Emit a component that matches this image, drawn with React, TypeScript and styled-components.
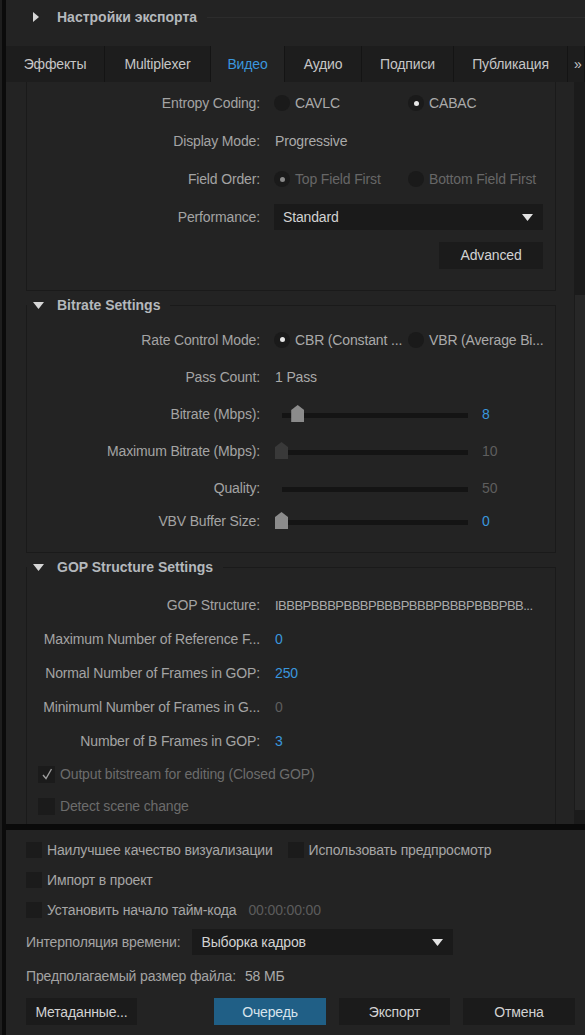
import React from 'react'
import styled, { createGlobalStyle } from 'styled-components'

const GlobalStyle = createGlobalStyle`
  * { box-sizing: border-box; }
  html, body { margin: 0; padding: 0; background: #232323; }
  body {
    font-family: "Liberation Sans", Arial, sans-serif;
    font-size: 14px;
    letter-spacing: -0.15px;
    color: #a4a4a4;
  }
`

const BLUE = '#3a96dd'

const Window = styled.div`
  width: 585px;
  height: 1035px;
  display: flex;
  overflow: hidden;
  background: #232323;
`

const EdgeStrip = styled.div`
  flex: none;
  width: 6px;
  background: #0b0b0b;
  border-left: 2px solid #1e1e1e;
`

const Main = styled.div`
  flex: 1;
  min-width: 0;
  display: flex;
  flex-direction: column;
`

const Header = styled.div`
  height: 46px;
  flex: none;
  display: flex;
  align-items: center;
  padding: 0 0 12px 27px;
`

const HeaderTitle = styled.span`
  margin-left: 18px;
  font-weight: bold;
  letter-spacing: 0;
  color: #b4b8bc;
  white-space: nowrap;
`

const HeaderRule = styled.div`
  flex: 1;
  height: 1px;
  margin-left: 10px;
  background: #2c2c2c;
`

const TabBar = styled.div`
  height: 36px;
  flex: none;
  display: flex;
  background: #161616;
  overflow: hidden;
`

const Tab = styled.div<{ $w?: number; $active?: boolean }>`
  flex: ${p => (p.$w ? 'none' : '1')};
  width: ${p => (p.$w ? `${p.$w}px` : 'auto')};
  display: flex;
  align-items: center;
  justify-content: ${p => (p.$w ? 'center' : 'flex-start')};
  padding-left: ${p => (p.$w ? '0' : '6px')};
  border-right: 1px solid #141414;
  background: ${p => (p.$active ? '#232323' : '#1d1d1d')};
  color: ${p => (p.$active ? BLUE : '#c6c6c6')};
  white-space: nowrap;
`

const ScrollView = styled.div`
  height: 742px;
  flex: none;
  display: flex;
  overflow: hidden;
`

const ScrollContent = styled.div`
  flex: 1;
  min-width: 0;
  padding: 0 18px 0 20px;
  display: flex;
  flex-direction: column;
  overflow: hidden;
`

const ScrollTrack = styled.div`
  flex: none;
  width: 11px;
  background: #1b1b1b;
`

const ScrollThumb = styled.div`
  margin: 213px 0 0 1px;
  height: 515px;
  background: #272727;
`

const ContinuedBox = styled.div`
  flex: none;
  border: 1px solid #1a1a1a;
  border-top: none;
  padding: 2px 0 16px;
  display: flex;
  flex-direction: column;
`

const Group = styled.fieldset`
  flex: none;
  margin: 3px 0 0;
  padding: 0 0 17px;
  min-width: 0;
  border: 1px solid #1a1a1a;
  display: flex;
  flex-direction: column;
`

const GroupBody = styled.div<{ $pt: number }>`
  padding-top: ${p => p.$pt}px;
  display: flex;
  flex-direction: column;
`

const Legend = styled.legend`
  height: 22px;
  display: flex;
  align-items: center;
  padding: 0 10px 0 6px;
  margin: 0;
  font-weight: bold;
  letter-spacing: 0;
  color: #b4b8bc;
  white-space: nowrap;
  & > svg {
    margin-right: 13px;
  }
`

const FormRow = styled.div<{ $h: number; $end?: boolean }>`
  height: ${p => p.$h}px;
  flex: none;
  display: flex;
  align-items: center;
  justify-content: ${p => (p.$end ? 'flex-end' : 'flex-start')};
  padding-right: ${p => (p.$end ? '12px' : '0')};
`

const Label = styled.div`
  flex: none;
  width: 221px;
  margin: 0 15px 0 12px;
  text-align: right;
  white-space: nowrap;
  overflow: hidden;
  text-overflow: ellipsis;
  color: #a4a4a4;
`

const Value = styled.span<{ $tone?: 'blue' | 'dim' | 'plain'; $narrow?: boolean }>`
  white-space: nowrap;
  font-size: ${p => (p.$narrow ? '13px' : 'inherit')};
  letter-spacing: ${p => (p.$narrow ? '-0.5px' : 'inherit')};
  color: ${p => (p.$tone === 'blue' ? BLUE : p.$tone === 'dim' ? '#5e5e5e' : '#aaaaaa')};
`

const RadioGroup = styled.div`
  display: grid;
  grid-template-columns: 134px auto;
  margin-left: -1px;
`

const RadioOption = styled.label<{ $disabled?: boolean }>`
  display: flex;
  align-items: center;
  gap: 5px;
  min-width: 0;
  white-space: nowrap;
  color: ${p => (p.$disabled ? '#676767' : '#aaaaaa')};
`

const RadioCircle = styled.span<{ $on?: boolean; $disabled?: boolean }>`
  flex: none;
  width: 16px;
  height: 16px;
  border-radius: 50%;
  background: #1a1a1a;
  display: flex;
  align-items: center;
  justify-content: center;
  &::after {
    content: '';
    display: ${p => (p.$on ? 'block' : 'none')};
    width: 5px;
    height: 5px;
    border-radius: 50%;
    background: ${p => (p.$disabled ? '#8a8a8a' : '#e6e6e6')};
  }
`

const Select = styled.div<{ $w: number }>`
  width: ${p => p.$w}px;
  height: 26px;
  display: flex;
  align-items: center;
  justify-content: space-between;
  padding: 0 10px 0 9px;
  background: #1a1a1a;
  color: #d2d2d2;
`

const Button = styled.button<{ $primary?: boolean; $w?: number }>`
  flex: none;
  width: ${p => p.$w ?? 111}px;
  height: 27px;
  border: none;
  padding: 0;
  font: inherit;
  letter-spacing: inherit;
  background: ${p => (p.$primary ? '#205f86' : '#1b1b1b')};
  color: ${p => (p.$primary ? '#d8e4ec' : '#d2d2d2')};
`

const SliderWrap = styled.div`
  position: relative;
  flex: none;
  width: 193px;
  height: 17px;
  padding: 8px 0 4px 7px;
`

const Track = styled.div`
  height: 5px;
  background: #141414;
`

const Thumb = styled.div<{ $dim?: boolean }>`
  position: absolute;
  top: 0;
  width: 13px;
  height: 17px;
  background: ${p => (p.$dim ? '#393939' : '#8b8b8b')};
  clip-path: polygon(50% 0, 100% 30%, 100% 100%, 0 100%, 0 30%);
`

const SliderValue = styled(Value)`
  margin-left: 14px;
`

const CheckBox = styled.span<{ $size?: number }>`
  flex: none;
  width: ${p => p.$size ?? 16}px;
  height: ${p => p.$size ?? 16}px;
  background: #1b1b1b;
  display: flex;
  align-items: center;
  justify-content: center;
`

const CheckLine = styled.label<{ $indent?: number; $disabled?: boolean }>`
  display: flex;
  align-items: center;
  gap: 5px;
  margin-left: ${p => p.$indent ?? 0}px;
  white-space: nowrap;
  color: ${p => (p.$disabled ? '#6c6c6c' : '#a6a6a6')};
`

const Separator = styled.div`
  height: 6px;
  flex: none;
  background: #0a0a0a;
`

const BottomPanel = styled.div`
  flex: 1;
  padding: 5px 10px 0 20px;
  display: flex;
  flex-direction: column;
`

const BottomRow = styled.div<{ $h: number }>`
  height: ${p => p.$h}px;
  flex: none;
  display: flex;
  align-items: center;
  white-space: nowrap;
`

const TimeCode = styled.span`
  margin-left: 12px;
  color: #5c5c5c;
`

const InlineLabel = styled.span<{ $gap?: number }>`
  margin-right: ${p => p.$gap ?? 0}px;
  color: #a4a4a4;
`

const ButtonBar = styled.div`
  margin-top: 5px;
  display: flex;
  align-items: center;
`

const ButtonGroup = styled.div`
  margin-left: auto;
  display: flex;
  gap: 13px;
`

const Caret = ({ dir }: { dir: 'right' | 'down' }) =>
  dir === 'right' ? (
    <svg width="6" height="10" viewBox="0 0 6 10">
      <polygon points="0,0 6,5 0,10" fill="#d6d6d6" />
    </svg>
  ) : (
    <svg width="11" height="7" viewBox="0 0 11 7">
      <polygon points="0,0 11,0 5.5,7" fill="#d6d6d6" />
    </svg>
  )

const DropArrow = () => (
  <svg width="11" height="7" viewBox="0 0 11 7">
    <polygon points="0,0 11,0 5.5,7" fill="#e2e2e2" />
  </svg>
)

const Tick = () => (
  <svg width="14" height="14" viewBox="0 0 14 14">
    <path d="M3 8 L6 11.5 L11.5 2" fill="none" stroke="#9c9c9c" strokeWidth="1.4" />
  </svg>
)

function Radio({ label, on, disabled }: { label: string; on?: boolean; disabled?: boolean }) {
  return (
    <RadioOption $disabled={disabled}>
      <RadioCircle $on={on} $disabled={disabled} />
      {label}
    </RadioOption>
  )
}

function Slider({ pos, value, tone, dim, noThumb }: { pos: number; value: string; tone: 'blue' | 'dim'; dim?: boolean; noThumb?: boolean }) {
  return (
    <>
      <SliderWrap>
        <Track />
        {!noThumb && <Thumb $dim={dim} style={{ left: `${pos * 180}px` }} />}
      </SliderWrap>
      <SliderValue $tone={tone}>{value}</SliderValue>
    </>
  )
}

const tabs = [
  { title: 'Эффекты', w: 99 },
  { title: 'Multiplexer', w: 106 },
  { title: 'Видео', w: 74, active: true },
  { title: 'Аудио', w: 77 },
  { title: 'Подписи', w: 92 },
  { title: 'Публикация', w: 114 },
]

export default function App() {
  return (
    <>
      <GlobalStyle />
      <Window>
        <EdgeStrip />
        <Main>
          <Header>
            <Caret dir="right" />
            <HeaderTitle>Настройки экспорта</HeaderTitle>
            <HeaderRule />
          </Header>

          <TabBar>
            {tabs.map(t => (
              <Tab key={t.title} $w={t.w} $active={t.active}>
                {t.title}
              </Tab>
            ))}
            <Tab>»</Tab>
          </TabBar>

          <ScrollView>
            <ScrollContent>
              <ContinuedBox>
                <FormRow $h={38}>
                  <Label>Entropy Coding:</Label>
                  <RadioGroup>
                    <Radio label="CAVLC" />
                    <Radio label="CABAC" on />
                  </RadioGroup>
                </FormRow>
                <FormRow $h={38}>
                  <Label>Display Mode:</Label>
                  <Value>Progressive</Value>
                </FormRow>
                <FormRow $h={38}>
                  <Label>Field Order:</Label>
                  <RadioGroup>
                    <Radio label="Top Field First" on disabled />
                    <Radio label="Bottom Field First" disabled />
                  </RadioGroup>
                </FormRow>
                <FormRow $h={38}>
                  <Label>Performance:</Label>
                  <Select $w={269} style={{ marginLeft: -1 }}>
                    Standard
                    <DropArrow />
                  </Select>
                </FormRow>
                <FormRow $h={38} $end>
                  <Button $w={104}>Advanced</Button>
                </FormRow>
              </ContinuedBox>

              <Group>
                <Legend>
                  <Caret dir="down" />
                  Bitrate Settings
                </Legend>
                <GroupBody $pt={5}>
                  <FormRow $h={37}>
                    <Label>Rate Control Mode:</Label>
                    <RadioGroup>
                      <Radio label="CBR (Constant ..." on />
                      <Radio label="VBR (Average Bi..." />
                    </RadioGroup>
                  </FormRow>
                  <FormRow $h={37}>
                    <Label>Pass Count:</Label>
                    <Value>1 Pass</Value>
                  </FormRow>
                  <FormRow $h={37}>
                    <Label>Bitrate (Mbps):</Label>
                    <Slider pos={0.09} value="8" tone="blue" />
                  </FormRow>
                  <FormRow $h={37}>
                    <Label>Maximum Bitrate (Mbps):</Label>
                    <Slider pos={0} value="10" tone="dim" dim />
                  </FormRow>
                  <FormRow $h={37}>
                    <Label>Quality:</Label>
                    <Slider pos={0} value="50" tone="dim" noThumb />
                  </FormRow>
                  <FormRow $h={29}>
                    <Label>VBV Buffer Size:</Label>
                    <Slider pos={0} value="0" tone="blue" />
                  </FormRow>
                </GroupBody>
              </Group>

              <Group>
                <Legend>
                  <Caret dir="down" />
                  GOP Structure Settings
                </Legend>
                <GroupBody $pt={10}>
                  <FormRow $h={34}>
                    <Label>GOP Structure:</Label>
                    <Value $narrow>IBBBPBBBPBBBPBBBPBBBPBBBPBBBPBB...</Value>
                  </FormRow>
                  <FormRow $h={34}>
                    <Label>Maximum Number of Reference F...</Label>
                    <Value $tone="blue">0</Value>
                  </FormRow>
                  <FormRow $h={34}>
                    <Label>Normal Number of Frames in GOP:</Label>
                    <Value $tone="blue">250</Value>
                  </FormRow>
                  <FormRow $h={34}>
                    <Label>Minimuml Number of Frames in G...</Label>
                    <Value $tone="dim">0</Value>
                  </FormRow>
                  <FormRow $h={34}>
                    <Label>Number of B Frames in GOP:</Label>
                    <Value $tone="blue">3</Value>
                  </FormRow>
                  <FormRow $h={32}>
                    <CheckLine $indent={11} $disabled>
                      <CheckBox $size={17}>
                        <Tick />
                      </CheckBox>
                      Output bitstream for editing (Closed GOP)
                    </CheckLine>
                  </FormRow>
                  <FormRow $h={32}>
                    <CheckLine $indent={11} $disabled>
                      <CheckBox $size={17} />
                      Detect scene change
                    </CheckLine>
                  </FormRow>
                  <FormRow $h={40} />
                </GroupBody>
              </Group>
            </ScrollContent>
            <ScrollTrack>
              <ScrollThumb />
            </ScrollTrack>
          </ScrollView>

          <Separator />

          <BottomPanel>
            <BottomRow $h={30}>
              <CheckLine>
                <CheckBox />
                Наилучшее качество визуализации
              </CheckLine>
              <CheckLine $indent={15}>
                <CheckBox />
                Использовать предпросмотр
              </CheckLine>
            </BottomRow>
            <BottomRow $h={30}>
              <CheckLine>
                <CheckBox />
                Импорт в проект
              </CheckLine>
            </BottomRow>
            <BottomRow $h={30}>
              <CheckLine>
                <CheckBox />
                Установить начало тайм-кода
              </CheckLine>
              <TimeCode>00:00:00:00</TimeCode>
            </BottomRow>
            <BottomRow $h={34}>
              <InlineLabel $gap={12}>Интерполяция времени:</InlineLabel>
              <Select $w={261}>
                Выборка кадров
                <DropArrow />
              </Select>
            </BottomRow>
            <BottomRow $h={34}>
              <InlineLabel $gap={9}>Предполагаемый размер файла:</InlineLabel>
              <Value>58 МБ</Value>
            </BottomRow>
            <ButtonBar>
              <Button>Метаданные...</Button>
              <ButtonGroup>
                <Button $primary $w={112}>Очередь</Button>
                <Button>Экспорт</Button>
                <Button $w={112}>Отмена</Button>
              </ButtonGroup>
            </ButtonBar>
          </BottomPanel>
        </Main>
      </Window>
    </>
  )
}
